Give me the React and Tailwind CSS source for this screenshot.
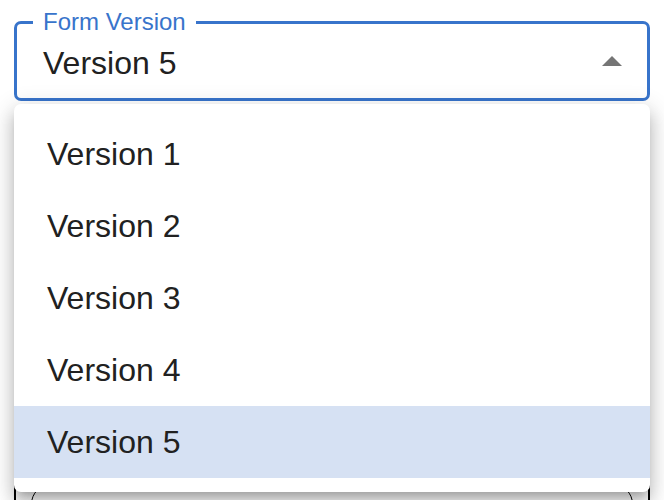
import React, { useState } from "react";

const versions = ["Version 1", "Version 2", "Version 3", "Version 4", "Version 5"];

const FormVersionSelect = () => {
  const [value, setValue] = useState("Version 5");

  return (
    <div className="relative h-[500px] w-full overflow-hidden bg-white font-['Liberation_Sans',Arial,sans-serif] text-[#212121]">
      {/* -- Campo seleccionado -- */}
      <div className="relative mx-[14px] mt-[21px] flex h-[80px] items-center rounded-[7px] border-[3px] border-[#3874cb] pl-[26px] pr-[25px] pt-[3px]">
        <span className="absolute left-[16px] top-[-14px] bg-white px-[10px] text-[24px] leading-[24px] text-[#3874cb]">
          Form Version
        </span>
        <span className="text-[32px] leading-none">{value}</span>
        <svg
          className="ml-auto mb-[3px]"
          width="20"
          height="10"
          viewBox="0 0 20 10"
        >
          <polygon points="0,10 10,0 20,10" fill="#757575" />
        </svg>
      </div>

      {/* -- Elemento detrás del menú -- */}
      <div className="mx-[14px] mt-[339px] h-[60px] border-x-2 border-black px-[15px] pt-[44px]">
        <div className="h-[60px] rounded-[20px] border-[1.5px] border-black" />
      </div>

      {/* -- Menú desplegable -- */}
      <ul className="absolute left-[14px] top-[104px] w-[636px] overflow-hidden rounded-[7px] bg-white py-[14px] shadow-[0_8px_8px_-5px_rgba(0,0,0,0.2),0_12px_16px_2px_rgba(0,0,0,0.14),0_5px_22px_4px_rgba(0,0,0,0.12)]">
        {versions.map((v) => (
          <li
            key={v}
            onClick={() => setValue(v)}
            className={`flex h-[72px] cursor-pointer items-center pl-[33px] text-[32px] leading-none ${
              v === value ? "bg-[#d6e1f3]" : ""
            }`}
          >
            {v}
          </li>
        ))}
      </ul>
    </div>
  );
};

export default FormVersionSelect;
